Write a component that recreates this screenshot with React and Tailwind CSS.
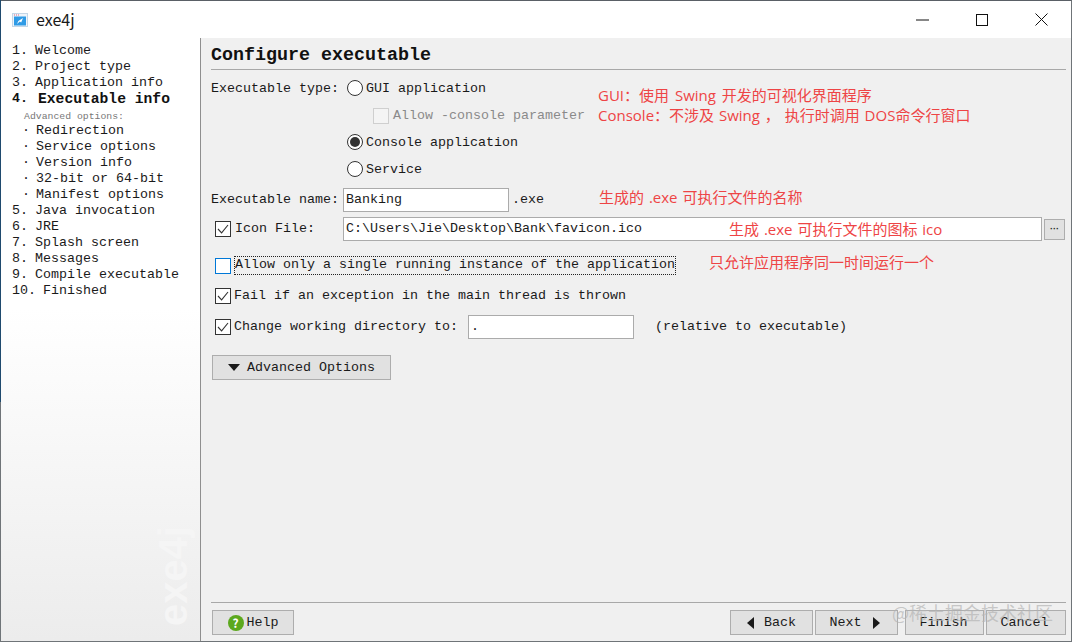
import React from "react";

const mono = "font-['Liberation_Mono','Noto_Sans_CJK_SC',monospace]";
const cjk = "font-['Noto_Sans_CJK_SC','Noto_Sans',sans-serif]";
const note = "font-['Open_Sans','Noto_Sans_CJK_SC',sans-serif]";

function Check({ checked = true, focus = false, disabled = false }) {
  const border = disabled ? "border-[#cfcfcf]" : focus ? "border-[#0078d7]" : "border-[#333333]";
  return (
    <span className={`w-4 h-4 shrink-0 border ${border} ${disabled ? "bg-[#f4f4f4]" : "bg-white"} flex items-center justify-center`}>
      {checked && (
        <svg width="12" height="10" viewBox="0 0 12 10" fill="none" stroke="#333333" strokeWidth="1.1">
          <path d="M1 5l3.6 3.8L11 1" />
        </svg>
      )}
    </span>
  );
}

function Radio({ checked = false }) {
  return (
    <span className="w-4 h-4 mb-[2px] shrink-0 rounded-full border border-[#333333] bg-white flex items-center justify-center">
      {checked && <span className="w-[10px] h-[10px] rounded-full bg-[#333333]" />}
    </span>
  );
}

function Field({ className = "", children }) {
  return (
    <div className={`bg-white border border-[#ababab] pl-[2px] flex items-center ${className}`}>{children}</div>
  );
}

function Btn({ className = "", children }) {
  return (
    <div className={`h-[25px] bg-[#e1e1e1] border border-[#adadad] flex items-center justify-center ${className}`}>{children}</div>
  );
}

const Tri = ({ d, w = 8, h = 12 }) => (
  <svg width={w} height={h} viewBox={`0 0 ${w} ${h}`} fill="#1a1a1a"><path d={d} /></svg>
);

const steps = [
  ["1.  Welcome"],
  ["2.  Project type"],
  ["3.  Application info"],
  ["4.  Executable info", "bold"],
  ["Advanced options:", "head"],
  ["Redirection", "sub"],
  ["Service options", "sub"],
  ["Version info", "sub"],
  ["32-bit or 64-bit", "sub"],
  ["Manifest options", "sub"],
  ["5.  Java invocation"],
  ["6.  JRE"],
  ["7.  Splash screen"],
  ["8.  Messages"],
  ["9.  Compile executable"],
  ["10.  Finished"],
];

function Step({ text, kind }) {
  if (kind === "bold")
    return (
      <div className="h-4 leading-4 font-bold text-[14.67px] whitespace-pre text-[#111111] flex">
        <span className="w-[26px] text-[13.33px]">4.</span>
        <span>Executable info</span>
      </div>
    );
  if (kind === "head")
    return <div className="h-4 leading-[19px] pl-3 text-[9.8px] whitespace-pre text-[#777777]">{text}</div>;
  if (kind === "sub")
    return (
      <div className="h-4 leading-4 pl-[10px] whitespace-pre flex">
        <span className="w-[14px]">·</span>
        <span>{text}</span>
      </div>
    );
  const [num, rest] = text.split(/\s{2}/);
  return (
    <div className="h-4 leading-4 whitespace-pre flex">
      <span className={num.length > 2 ? "w-[31px]" : "w-[23px]"}>{num}</span>
      <span>{rest}</span>
    </div>
  );
}

const Note = ({ className = "", children }) => (
  <div className={`absolute ${note} text-[15px] leading-5 text-[#ee4445] whitespace-pre ${className}`}>{children}</div>
);

export default function App() {
  return (
    <div className={`w-[1072px] h-[642px] bg-white relative flex flex-col border border-[#6f7478] border-t-[#5a6066] ${mono} text-[13.33px] text-[#1a1a1a]`}>
      {/* title bar */}
      <div className="h-[37px] shrink-0 flex items-center bg-white">
        <svg className="ml-[11px]" width="16" height="14" viewBox="0 0 16 14">
          <rect x="0.5" y="0.5" width="15" height="13" fill="#eef4fa" stroke="#c4d6e6" />
          <path d="M2 2h1M4 2h1M6 2h1" stroke="#e0607a" />
          <rect x="2" y="3.5" width="12" height="9" fill="#2f9be6" />
          <path d="M5 11l1.4-3L11 5 9.2 9.4 7.8 8.6z" fill="#ffffff" />
        </svg>
        <span className={`ml-2 mb-[2px] ${cjk} text-[16px] text-[#1a1a1a]`}>exe4j</span>
        <div className="ml-auto flex items-center h-full">
          <svg className="mr-[47px]" width="13" height="2" viewBox="0 0 13 2"><path d="M0 1h13" stroke="#111111" /></svg>
          <svg className="mr-[47px]" width="12" height="12" viewBox="0 0 12 12" fill="none"><rect x="0.5" y="0.5" width="11" height="11" stroke="#111111" /></svg>
          <svg className="mr-[23px]" width="13" height="13" viewBox="0 0 13 13" fill="none" stroke="#111111"><path d="M0.5 0.5l12 12M12.5 0.5l-12 12" /></svg>
        </div>
      </div>

      <div className="flex-1 flex min-h-0">
        {/* sidebar */}
        <aside className="w-[200px] shrink-0 border-r border-[#8f8f8f] bg-gradient-to-b from-white from-45% to-[#ececec] pl-[11px] pt-[5px] relative overflow-hidden">
          {steps.map(([t, k]) => (
            <Step key={t} text={t} kind={k} />
          ))}
          <div className="absolute left-[153px] bottom-[15px] [writing-mode:vertical-rl] rotate-180 font-['Liberation_Sans',sans-serif] font-bold text-[40px] leading-[38px] text-[#f5f5f5]">
            exe4j
          </div>
        </aside>

        {/* main */}
        <main className="flex-1 bg-[#f0f0f0] flex flex-col pl-[10px] pr-[5px] min-w-0">
          <div className="h-[32px] shrink-0 border-b border-[#a8a8a8] pt-[5px] flex items-center font-bold text-[18.33px] text-[#111111]">
            Configure executable
          </div>

          <div className="flex items-center h-[27px] mt-[5px]">
            <span className="w-[136px]">Executable type:</span>
            <Radio />
            <span className="ml-[3px]">GUI application</span>
          </div>
          <div className="flex items-center h-[27px] pl-[162px] text-[#8a8a8a]">
            <Check checked={false} disabled />
            <span className="ml-[4px]">Allow -console parameter</span>
          </div>
          <div className="flex items-center h-[27px] pl-[136px]">
            <Radio checked />
            <span className="ml-[3px]">Console application</span>
          </div>
          <div className="flex items-center h-[27px] pl-[136px]">
            <Radio />
            <span className="ml-[3px]">Service</span>
          </div>

          <div className="flex items-center h-[24px] mt-[5px]">
            <span className="w-[132px]">Executable name:</span>
            <Field className="w-[166px] h-[24px]">Banking</Field>
            <span className="ml-[3px]">.exe</span>
          </div>

          <div className="flex items-center h-[24px] mt-[5px] pl-[4px]">
            <Check />
            <span className="ml-[4px] w-[108px]">Icon File:</span>
            <Field className="w-[699px] h-[24px]">C:\Users\Jie\Desktop\Bank\favicon.ico</Field>
            <div className="ml-[2px] w-[21px] h-[21px] bg-[#e1e1e1] border border-[#adadad] flex items-center justify-center font-['Liberation_Sans',sans-serif] font-bold text-[9px] leading-none text-[#222222]">···</div>
          </div>

          <div className="flex items-center h-[19px] mt-[15px] pl-[4px]">
            <Check checked={false} focus />
            <span className="ml-[3px] h-[19px] leading-[18px] outline-1 outline-dotted outline-[#222222] -outline-offset-1 pl-px pr-px">Allow only a single running instance of the application</span>
          </div>

          <div className="flex items-center h-[19px] mt-[11px] pl-[4px]">
            <Check />
            <span className="ml-[3px]">Fail if an exception in the main thread is thrown</span>
          </div>

          <div className="flex items-center h-[24px] mt-[10px] pl-[4px]">
            <Check />
            <span className="ml-[3px]">Change working directory to:</span>
            <Field className="ml-[10px] w-[166px] h-[24px]">.</Field>
            <span className="ml-[21px]">(relative to executable)</span>
          </div>

          <Btn className="w-[179px] mt-[16px] ml-px gap-[7px]">
            <Tri d="M0 0h12L6 7z" w={12} h={7} />
            <span>Advanced Options</span>
          </Btn>

          <div className="flex-1" />

          <div className="border-t border-[#a8a8a8] pt-[7px] pb-[6px] flex">
            <Btn className="w-[82px] ml-px gap-[3px]">
              <span className={`w-4 h-4 rounded-full bg-[#5ca81e] text-white text-[12px] leading-4 font-bold text-center ${cjk}`}>?</span>
              <span>Help</span>
            </Btn>
            <div className="flex-1" />
            <Btn className="w-[83px] gap-[9px]">
              <Tri d="M7 0v12L0 6z" />
              <span>Back</span>
            </Btn>
            <Btn className="w-[83px] ml-[2px] gap-[11px] pr-[3px]">
              <span>Next</span>
              <Tri d="M0 0v12l7-6z" />
            </Btn>
            <Btn className="w-[79px] ml-[7px] pr-[2px]">Finish</Btn>
            <Btn className="w-[80px] ml-[2px] pr-[3px]">Cancel</Btn>
          </div>
        </main>
      </div>

      {/* window edge against the desktop behind it */}
      <div className="absolute -left-px -top-px w-px h-[402px] bg-[#1f4a6e]" />

      {/* annotations over the window */}
      <Note className="left-[597px] top-[84px] [word-spacing:2px]">GUI：使用 Swing 开发的可视化界面程序</Note>
      <Note className="left-[597px] top-[104px] [word-spacing:1px]">Console：不涉及 Swing ， 执行时调用 DOS命令行窗口</Note>
      <Note className="left-[598px] top-[186px] [word-spacing:1px]">生成的 .exe 可执行文件的名称</Note>
      <Note className="left-[728px] top-[218px] [word-spacing:1px]">生成 .exe 可执行文件的图标 ico</Note>
      <Note className="left-[708px] top-[251px]">只允许应用程序同一时间运行一个</Note>
      <div className={`absolute left-[891px] top-[599px] ${cjk} text-[18px] leading-6 text-[#b4b4b4]/70 whitespace-pre`}>@稀土掘金技术社区</div>
    </div>
  );
}
